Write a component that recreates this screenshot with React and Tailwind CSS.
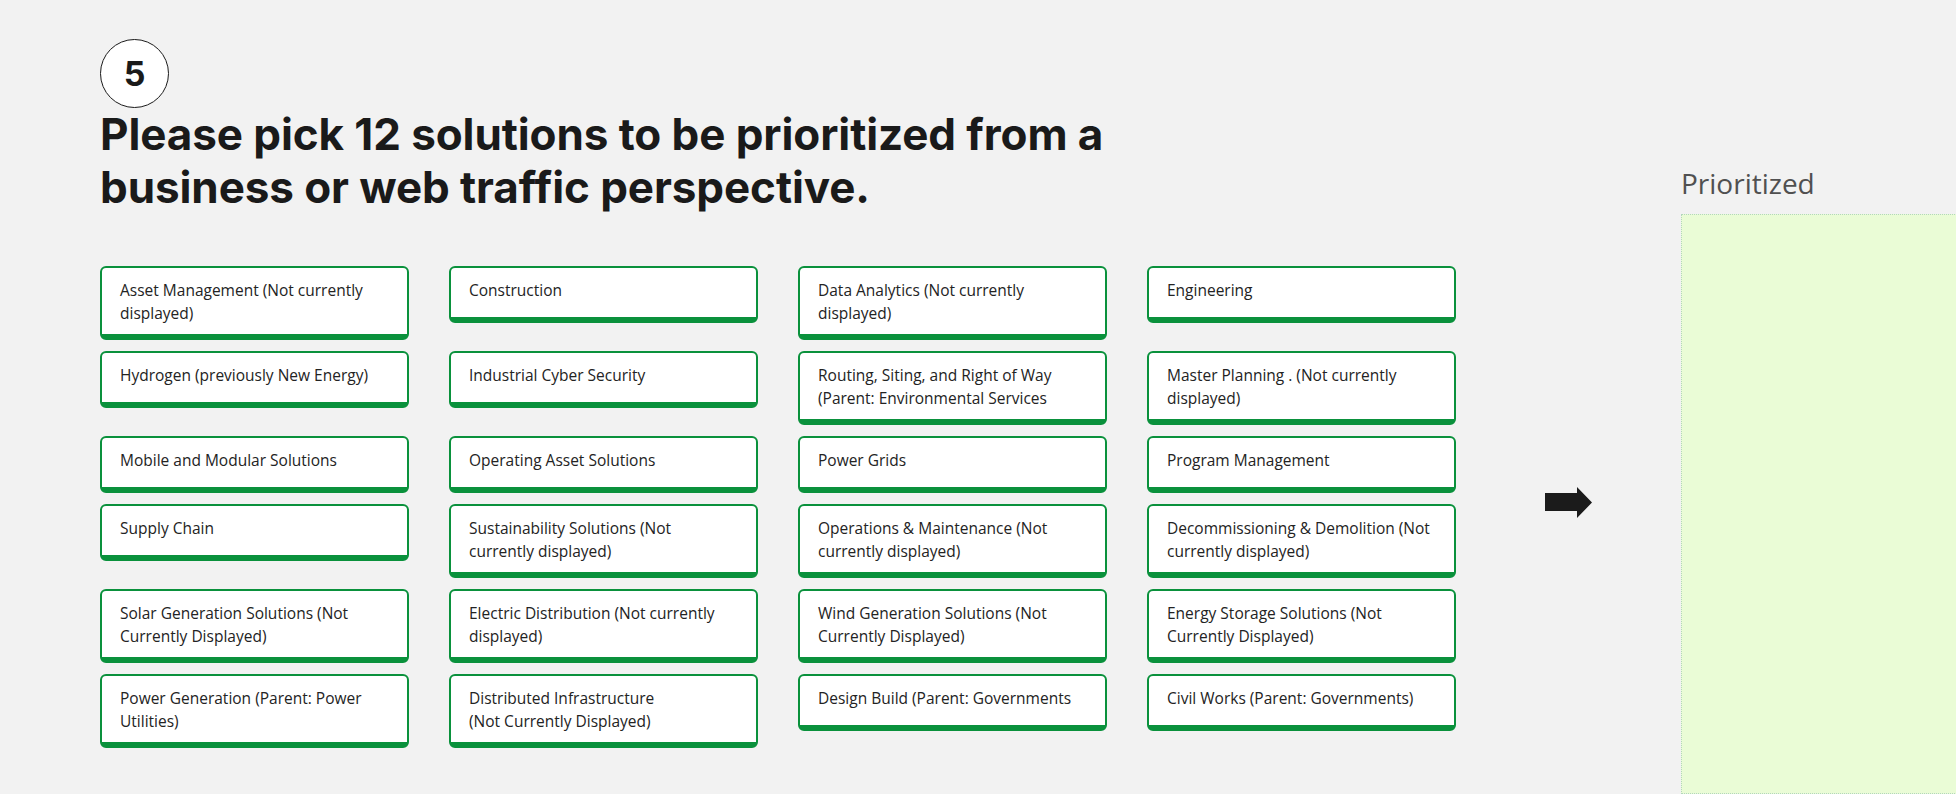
// Solution prioritization step
const cards = [
  ['Asset Management (Not currently', 'displayed)'],
  ['Construction'],
  ['Data Analytics (Not currently', 'displayed)'],
  ['Engineering'],
  ['Hydrogen (previously New Energy)'],
  ['Industrial Cyber Security'],
  ['Routing, Siting, and Right of Way', '(Parent: Environmental Services'],
  ['Master Planning . (Not currently', 'displayed)'],
  ['Mobile and Modular Solutions'],
  ['Operating Asset Solutions'],
  ['Power Grids'],
  ['Program Management'],
  ['Supply Chain'],
  ['Sustainability Solutions (Not', 'currently displayed)'],
  ['Operations & Maintenance (Not', 'currently displayed)'],
  ['Decommissioning & Demolition (Not', 'currently displayed)'],
  ['Solar Generation Solutions (Not', 'Currently Displayed)'],
  ['Electric Distribution (Not currently', 'displayed)'],
  ['Wind Generation Solutions (Not', 'Currently Displayed)'],
  ['Energy Storage Solutions (Not', 'Currently Displayed)'],
  ['Power Generation (Parent: Power', 'Utilities)'],
  ['Distributed Infrastructure', '(Not Currently Displayed)'],
  ['Design Build (Parent: Governments'],
  ['Civil Works (Parent: Governments)'],
];

function Card({ lines }) {
  return (
    <div className="min-h-[57px] bg-white rounded-[6px] border-2 border-b-[6px] border-[#0a913c] pl-[18px] pr-[12px] pt-[11px] pb-[10px] text-[15.5px] leading-[22.5px] text-[#232323] font-['Open_Sans',sans-serif]">
      {lines.map((l, i) => (
        <div key={i} className="whitespace-nowrap">{l}</div>
      ))}
    </div>
  );
}

function Arrow() {
  return (
    <svg width="48" height="31" viewBox="0 0 48 31" className="block">
      <path d="M0 6 H32 V0 L47 15.5 L32 31 V24 H0 Z" fill="#1b1b1b" />
    </svg>
  );
}

export default function App() {
  return (
    <div className="w-[1956px] h-[794px] overflow-hidden bg-[#f2f2f2] flex">
      <div className="pl-[100px] pt-[39px] w-[1456px] shrink-0">
        <div className="w-[69px] h-[69px] rounded-full border-[1.5px] border-[#1a1a1a] bg-white flex items-center justify-center text-[34px] font-bold text-[#1a1a1a] font-['Inter',sans-serif] leading-none">
          5
        </div>
        <h1 className="mt-0 text-[44px] leading-[53px] font-bold tracking-[-0.002em] text-[#1a1a1a] font-['Inter',sans-serif]">
          Please pick 12 solutions to be prioritized from a<br />
          business or web traffic perspective.
        </h1>
        <div className="mt-[52px] grid grid-cols-[309px_309px_309px_309px] gap-x-[40px] gap-y-[11px] items-start">
          {cards.map((c, i) => (
            <Card key={i} lines={c} />
          ))}
        </div>
      </div>
      <div className="ml-[89px] mt-[487px] shrink-0">
        <Arrow />
      </div>
      <div className="ml-[88px] shrink-0 pt-[169px] flex flex-col">
        <div className="text-[28px] leading-[28px] text-[#505050] font-['Open_Sans',sans-serif]">Prioritized</div>
        <div className="mt-[17px] w-[320px] h-[600px] bg-[#eafcd6] border border-dotted border-[#b3d6bc]"></div>
      </div>
    </div>
  );
}
